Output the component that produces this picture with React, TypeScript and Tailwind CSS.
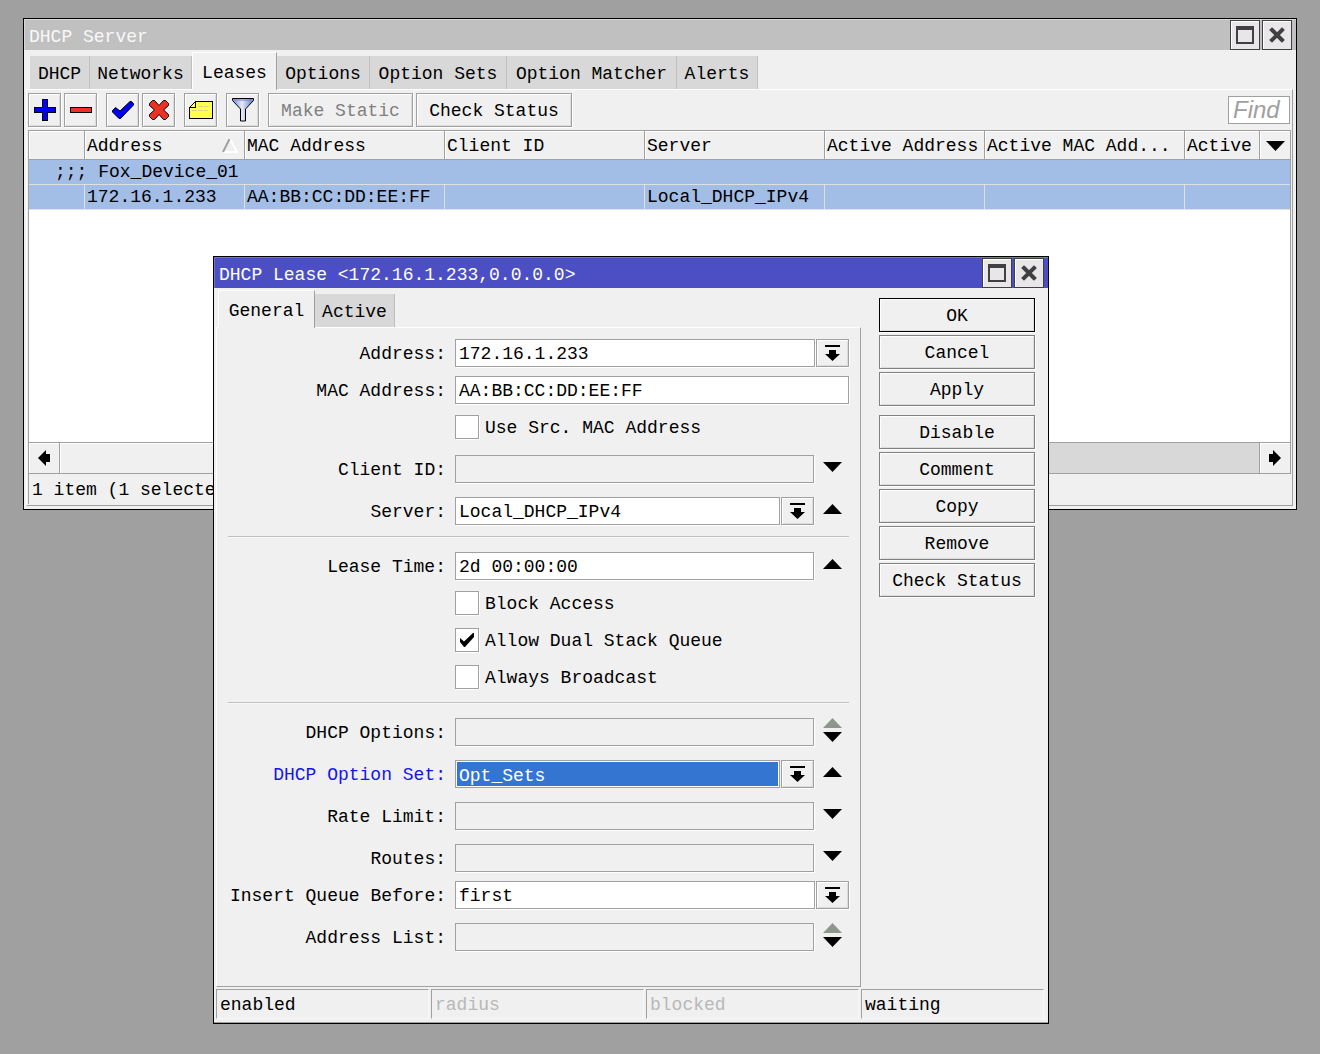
import type { ReactNode } from "react";

const BEVEL =
  "border bg-[#f0f0f0] shadow-[inset_1px_1px_0_#fff,inset_-1px_-1px_0_#dcdcdc,1px_1px_0_#fff]";

function MaximizeIcon() {
  return (
    <svg width="18" height="18" viewBox="0 0 18 18" fill="none" shapeRendering="crispEdges" aria-hidden="true">
      <path d="M0 0h18v18H0z M2 4v12h14V4z" fill="#404040" fillRule="evenodd" />
    </svg>
  );
}

function CloseIcon() {
  return (
    <svg width="16" height="16" viewBox="0 0 16 16" fill="none" aria-hidden="true">
      <path d="M3 3l10 10M13 3L3 13" stroke="#404040" strokeWidth="4" strokeLinecap="square" />
    </svg>
  );
}

function TitleBar({ title, active }: { title: string; active: boolean }) {
  return (
    <header
      className={`flex h-[31px] items-center gap-0.5 border-l border-t pl-1 pr-1 ${
        active
          ? "border-[#7474d4] bg-[#4c4fc4] text-white"
          : "border-[#d8d8d8] bg-[#c0c0c0] text-[#f8f8f8]"
      }`}
    >
      <h2 className="flex-1 pt-1">{title}</h2>
      <button type="button" aria-label="Maximize" className="flex size-[30px] items-center justify-center border border-[#404040] bg-[#e8e6e8] shadow-[inset_1px_1px_0_#fff]">
        <MaximizeIcon />
      </button>
      <button type="button" aria-label="Close" className="flex size-[30px] items-center justify-center border border-[#404040] bg-[#e8e6e8] shadow-[inset_1px_1px_0_#fff]">
        <CloseIcon />
      </button>
    </header>
  );
}

function Tab({ label, width, active = false }: { label: string; width: string; active?: boolean }) {
  return (
    <button
      type="button"
      role="tab"
      aria-selected={active}
      className={`${width} whitespace-nowrap text-center ${
        active
          ? "h-[38px] -mb-px border-l border-t border-r border-l-white border-t-white border-r-[#a0a0a0] bg-[#f0f0f0] pt-0.5"
          : "h-[33px] border-r border-[#c0c0c0] bg-[#d8d8d8] pt-0.5"
      }`}
    >
      {label}
    </button>
  );
}

function ToolButton({ label, children }: { label: string; children: ReactNode }) {
  return (
    <button type="button" aria-label={label} className={`flex h-[34px] w-[33px] items-center justify-center border-[#a0a0a0] ${BEVEL}`}>
      {children}
    </button>
  );
}

function PlusIcon() {
  return (
    <svg width="22" height="22" viewBox="0 0 22 22" shapeRendering="crispEdges" aria-hidden="true">
      <path d="M8 0h6v8h8v6h-8v8H8v-8H0V8h8z" fill="#000" />
      <path d="M9 1h4v8h8v4h-8v8H9v-8H1V9h8z" fill="#0000f8" />
    </svg>
  );
}

function MinusIcon() {
  return (
    <svg width="22" height="22" viewBox="0 0 22 22" shapeRendering="crispEdges" aria-hidden="true">
      <path d="M0 8h22v6H0z" fill="#000" />
      <path d="M1 9h20v4H1z" fill="#ee3124" />
    </svg>
  );
}

function CheckIcon() {
  return (
    <svg width="24" height="20" viewBox="0 0 24 20" aria-hidden="true">
      <path d="M1.5 10.5L4.5 7.5 9 11 19 1.5h1.5l2 2V5L9.5 18.5H8L1.5 12z" fill="#0000f8" stroke="#000" />
    </svg>
  );
}

function CrossIcon() {
  return (
    <svg width="20" height="20" viewBox="0 0 20 20" aria-hidden="true">
      <path
        d="M3.500.5h2L10 5.500 14.500.5h2l3 3v2L14.500 10l5 4.500v2l-3 3h-2L10 14.500l-4.500 5h-2l-3-3v-2l5-4.500-5-4.500v-2z"
        fill="#ee3124"
        stroke="#000"
      />
    </svg>
  );
}

function NoteIcon() {
  return (
    <svg width="24" height="18" viewBox="0 0 24 18" fill="none" shapeRendering="crispEdges" aria-hidden="true">
      <path d="M6.500.5h17v17H.500v-11z" fill="#ffff50" stroke="#000" />
      <path d="M6.500.5v6h-6" stroke="#000" />
      <path d="M9 5.500h11M3 9.500h16" stroke="#d8d880" strokeDasharray="5 1" />
    </svg>
  );
}

function FunnelIcon() {
  return (
    <svg width="22" height="24" viewBox="0 0 22 24" aria-hidden="true">
      <defs>
        <linearGradient id="funnel" x1="0" x2="1">
          <stop offset="0.1" stopColor="#8ea0dc" />
          <stop offset="0.45" stopColor="#e4eaff" />
          <stop offset="0.9" stopColor="#7c8ed0" />
        </linearGradient>
      </defs>
      <path d="M.5.5h21v2L13.500 11v12h-5V11L.5 2.500z" fill="url(#funnel)" stroke="#000" />
      <path d="M2 2h18" stroke="#7080b8" />
    </svg>
  );
}

function Triangle({ up = false, muted = false }: { up?: boolean; muted?: boolean }) {
  return (
    <svg width="19" height="10" viewBox="0 0 19 10" aria-hidden="true">
      <path d={up ? "M9.500 0L19 10H0z" : "M0 0h19L9.500 10z"} fill={muted ? "#8f968f" : "#000"} />
    </svg>
  );
}

function SideArrow({ right = false }: { right?: boolean }) {
  return (
    <svg width="12" height="16" viewBox="0 0 12 16" aria-hidden="true">
      <path d={right ? "M4 0l8 8-8 8v-4H0V4h4z" : "M8 0L0 8l8 8v-4h4V4H8z"} fill="#000" />
    </svg>
  );
}

function DropButton({ label }: { label: string }) {
  return (
    <button type="button" aria-label={label} className={`ml-px flex h-7 w-[33px] shrink-0 items-center justify-center border-[#a0a0a0] ${BEVEL}`}>
      <svg width="15" height="16" viewBox="0 0 15 16" aria-hidden="true">
        <path d="M0 0h15v2H0zM4 5h7v4h4l-7.500 7L0 9h4z" fill="#000" />
      </svg>
    </button>
  );
}

type Arrow = "up" | "down" | "both";

function Arrows({ kind, label }: { kind: Arrow; label: string }) {
  return (
    <div className="flex w-[35px] shrink-0 flex-col items-center justify-center gap-1 pb-1 pl-0.5">
      {kind !== "down" && (
        <button type="button" aria-label={`${label} up`}>
          <Triangle up muted={kind === "both"} />
        </button>
      )}
      {kind !== "up" && (
        <button type="button" aria-label={`${label} down`}>
          <Triangle />
        </button>
      )}
    </div>
  );
}

type FieldProps = {
  id: string;
  label: string;
  value?: string;
  select?: boolean;
  drop?: boolean;
  arrow?: Arrow;
  changed?: boolean;
  spaced?: boolean;
};

function Field({ id, label, value = "", select, drop, arrow, changed, spaced }: FieldProps) {
  const empty = value === "";
  const box = `h-7 min-w-0 flex-1 appearance-none rounded-none border border-[#a0a0a0] pl-[3px] outline-none shadow-[1px_1px_0_#fff] ${
    empty ? "bg-[#f0f0f0]" : "bg-white"
  } ${select ? "" : "pt-0.5"}`;
  return (
    <div className={`flex h-7 gap-[9px] ${spaced ? "mt-[5px]" : ""}`}>
      <label htmlFor={id} className={`w-[218px] shrink-0 whitespace-nowrap pt-px text-right ${changed ? "text-[#1414f0]" : ""}`}>
        {label}:
      </label>
      <div className="flex min-w-0 flex-1">
        {select && changed && (
          <div className="flex h-7 min-w-0 flex-1 border border-[#a0a0a0] bg-white p-px">
            <select id={id} defaultValue={value} className="min-w-0 flex-1 appearance-none rounded-none bg-[#3375d0] pl-0.5 text-white outline-none">
              <option>{value}</option>
            </select>
          </div>
        )}
        {select && !changed && (
          <select id={id} defaultValue={value} className={box}>
            <option>{value}</option>
          </select>
        )}
        {!select && <input id={id} type="text" defaultValue={value} className={box} />}
        {drop && <DropButton label={`${label} list`} />}
        {arrow && <Arrows kind={arrow} label={label} />}
      </div>
    </div>
  );
}

function CheckField({ label, checked = false }: { label: string; checked?: boolean }) {
  return (
    <label className="ml-[227px] flex h-7 items-center gap-1.5">
      <span className="relative flex">
        <input type="checkbox" defaultChecked={checked} className="peer size-6 appearance-none border border-[#a0a0a0] bg-white shadow-[1px_1px_0_#fff]" />
        <svg className="pointer-events-none absolute left-1 top-1 hidden peer-checked:block" width="16" height="16" viewBox="0 0 16 16" aria-hidden="true">
          <path d="M1 6l4 3.500L14 1h1v4L6 15H5L1 10z" fill="#000" />
        </svg>
      </span>
      <span className="pt-0.5">{label}</span>
    </label>
  );
}

function Divider() {
  return <hr className="mt-0.5 h-0.5 border-t border-[#c0c0c0] bg-[#f8f8f8]" />;
}

function SideButton({ label, primary = false, spaced = false }: { label: string; primary?: boolean; spaced?: boolean }) {
  return (
    <button
      type="button"
      className={`h-[34px] pt-0.5 ${primary ? "border-black" : "border-[#808080]"} ${spaced ? "mt-1.5" : ""} ${BEVEL}`}
    >
      {label}
    </button>
  );
}

const COLUMNS = [
  { label: "", width: "w-14" },
  { label: "Address", width: "w-40" },
  { label: "MAC Address", width: "w-[200px]" },
  { label: "Client ID", width: "w-[200px]" },
  { label: "Server", width: "w-[180px]" },
  { label: "Active Address", width: "w-40" },
  { label: "Active MAC Add...", width: "w-[200px]" },
  { label: "Active", width: "" },
];

const ROW = ["", "172.16.1.233", "AA:BB:CC:DD:EE:FF", "", "Local_DHCP_IPv4", "", ""];

function LeaseTable() {
  return (
    <div className="min-h-[312px] border-x border-t border-[#a0a0a0] bg-white">
      <table className="w-full table-fixed border-separate border-spacing-0 text-left">
        <colgroup>
          {COLUMNS.map((c, i) => (
            <col key={i} className={c.width} />
          ))}
          <col className="w-[30px]" />
        </colgroup>
        <thead>
          <tr className="h-[29px] bg-[#f0f0f0]">
            {COLUMNS.map((c, i) => (
              <th key={i} scope="col" className="overflow-hidden whitespace-nowrap border-b border-r border-[#a0a0a0] p-0 pl-0.5 font-normal leading-[26px] shadow-[inset_1px_1px_0_#fff]">
                <span className="flex items-center justify-between pr-1.5 pt-0.5">
                  {c.label}
                  {c.label === "Address" && (
                    <svg width="16" height="14" viewBox="0 0 16 14" fill="none" aria-hidden="true">
                      <path d="M8 0l7 13H0" stroke="#fff" strokeWidth="2" />
                      <path d="M7.500 0L1 13" stroke="#a0a0a0" strokeWidth="2" />
                    </svg>
                  )}
                </span>
              </th>
            ))}
            <th scope="col" className="border-b border-[#a0a0a0] p-0 shadow-[inset_1px_1px_0_#fff]">
              <button type="button" aria-label="Choose columns" className="flex w-full justify-center pt-0.5">
                <Triangle />
              </button>
            </th>
          </tr>
        </thead>
        <tbody className="bg-[#a2bde6]">
          <tr className="h-[25px]">
            <td colSpan={9} className="border-b border-[#e0e0e0] p-0 pl-[26px] leading-6">
              ;;; Fox_Device_01
            </td>
          </tr>
          <tr className="h-[25px]">
            {ROW.map((v, i) => (
              <td key={i} className="whitespace-nowrap border-b border-r border-[#e0e0e0] p-0 pl-0.5 leading-6">
                {v}
              </td>
            ))}
            <td colSpan={2} className="border-b border-[#e0e0e0] p-0" />
          </tr>
        </tbody>
      </table>
    </div>
  );
}

function ServerWindow() {
  return (
    <section className="absolute left-[23px] right-[23px] top-[18px] border border-black bg-[#f0f0f0] pb-[3px]">
      <TitleBar title="DHCP Server" active={false} />
      <div role="tablist" className="flex items-end pl-1.5 pt-0.5">
        <Tab label="DHCP" width="w-[60px]" />
        <Tab label="Networks" width="w-[102px]" />
        <Tab label="Leases" width="w-[85px]" active />
        <Tab label="Options" width="w-[93px]" />
        <Tab label="Option Sets" width="w-[137px]" />
        <Tab label="Option Matcher" width="w-[170px]" />
        <Tab label="Alerts" width="w-[81px]" />
      </div>
      <div className="ml-0.5 mr-[3px] border border-b-[#a0a0a0] border-l-white border-r-[#a0a0a0] border-t-white px-px pb-px">
        <div className="flex items-center gap-[9px] py-[3px]">
          <div className="flex gap-[3px]">
            <ToolButton label="Add"><PlusIcon /></ToolButton>
            <ToolButton label="Remove"><MinusIcon /></ToolButton>
          </div>
          <div className="flex gap-[3px]">
            <ToolButton label="Enable"><CheckIcon /></ToolButton>
            <ToolButton label="Disable"><CrossIcon /></ToolButton>
          </div>
          <ToolButton label="Comment"><NoteIcon /></ToolButton>
          <ToolButton label="Filter"><FunnelIcon /></ToolButton>
          <div className="flex gap-[3px]">
            <button type="button" disabled className={`h-[34px] w-[145px] border-[#a0a0a0] pt-0.5 text-[#808080] ${BEVEL}`}>
              Make Static
            </button>
            <button type="button" className={`h-[34px] w-[156px] border-[#a0a0a0] pt-0.5 ${BEVEL}`}>
              Check Status
            </button>
          </div>
          <input
            type="text"
            aria-label="Find"
            placeholder="Find"
            className="ml-auto mr-px h-7 w-[62px] border border-[#a0a0a0] bg-white pl-1 font-['Liberation_Sans',sans-serif] text-2xl italic leading-6 outline-none placeholder:text-[#a0a0a0]"
          />
        </div>
        <LeaseTable />
        <div className="flex h-8 border border-[#a0a0a0] bg-[#d8d8d8]">
          <button type="button" aria-label="Scroll left" className="flex w-[31px] items-center justify-center border-r border-[#a0a0a0] bg-[#f0f0f0] shadow-[inset_1px_1px_0_#fff]">
            <SideArrow />
          </button>
          <div className="w-3/4 border-r border-[#a0a0a0] bg-[#f0f0f0] shadow-[inset_1px_1px_0_#fff]" />
          <button type="button" aria-label="Scroll right" className="ml-auto flex w-[31px] items-center justify-center border-l border-[#a0a0a0] bg-[#f0f0f0] shadow-[inset_1px_1px_0_#fff]">
            <SideArrow right />
          </button>
        </div>
        <p className="h-[30px] border-l border-[#a0a0a0] pl-[3px] leading-[32px]">1 item (1 selected)</p>
      </div>
    </section>
  );
}

const STATES = [
  { label: "enabled", on: true },
  { label: "radius", on: false },
  { label: "blocked", on: false },
];

function LeaseDialog() {
  return (
    <section className="absolute left-[213px] right-[271px] top-64 border border-black bg-[#f0f0f0]">
      <TitleBar title="DHCP Lease <172.16.1.233,0.0.0.0>" active />
      <div className="flex pl-0.5 pr-[13px]">
        <div className="min-w-0 flex-1">
          <div role="tablist" className="flex items-end pl-0.5 pt-0.5">
            <Tab label="General" width="w-[97px]" active />
            <Tab label="Active" width="w-20" />
          </div>
          <form className="flex flex-col gap-[9px] border border-b-[#a0a0a0] border-l-white border-r-[#a0a0a0] border-t-white px-[11px] pb-[35px] pt-[11px]">
            <Field id="address" label="Address" value="172.16.1.233" drop />
            <Field id="mac" label="MAC Address" value="AA:BB:CC:DD:EE:FF" />
            <CheckField label="Use Src. MAC Address" />
            <Field id="client" label="Client ID" arrow="down" spaced />
            <Field id="server" label="Server" value="Local_DHCP_IPv4" select drop arrow="up" spaced />
            <Divider />
            <Field id="time" label="Lease Time" value="2d 00:00:00" arrow="up" spaced />
            <CheckField label="Block Access" />
            <CheckField label="Allow Dual Stack Queue" checked />
            <CheckField label="Always Broadcast" />
            <Divider />
            <Field id="options" label="DHCP Options" arrow="both" spaced />
            <Field id="set" label="DHCP Option Set" value="Opt_Sets" select drop arrow="up" changed spaced />
            <Field id="rate" label="Rate Limit" arrow="down" spaced />
            <Field id="routes" label="Routes" arrow="down" spaced />
            <Field id="queue" label="Insert Queue Before" value="first" select drop />
            <Field id="list" label="Address List" arrow="both" spaced />
          </form>
        </div>
        <div className="ml-[18px] flex w-[156px] shrink-0 flex-col gap-[3px] pt-2.5">
          <SideButton label="OK" primary />
          <SideButton label="Cancel" />
          <SideButton label="Apply" />
          <SideButton label="Disable" spaced />
          <SideButton label="Comment" />
          <SideButton label="Copy" />
          <SideButton label="Remove" />
          <SideButton label="Check Status" />
        </div>
      </div>
      <footer className="flex gap-0.5 border-b border-[#a0a0a0] pb-[3px] pl-0.5 pr-1 pt-0.5">
        {STATES.map((s) => (
          <span
            key={s.label}
            className={`h-[30px] flex-1 border border-b-[#f8f8f8] border-l-[#a0a0a0] border-r-[#f8f8f8] border-t-[#a0a0a0] pl-[3px] pt-px ${
              s.on ? "" : "text-[#b8b8b8]"
            }`}
          >
            {s.label}
          </span>
        ))}
        <span className="h-[30px] w-[183px] border border-b-[#f8f8f8] border-l-[#a0a0a0] border-r-[#f8f8f8] border-t-[#a0a0a0] pl-[3px] pt-px">
          waiting
        </span>
      </footer>
    </section>
  );
}

export default function App() {
  return (
    <main className="relative min-h-screen bg-[#a0a0a0] font-['Liberation_Mono',monospace] text-lg leading-7 text-black">
      <ServerWindow />
      <LeaseDialog />
    </main>
  );
}
